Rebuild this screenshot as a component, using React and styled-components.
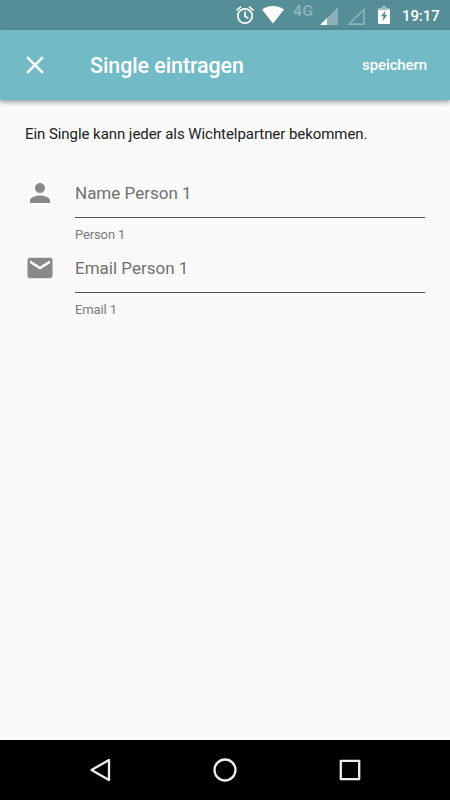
import React from "react";
import styled, { createGlobalStyle } from "styled-components";

const Global = createGlobalStyle`
  * { box-sizing: border-box; }
  body { margin: 0; background: #fafafa; font-family: Roboto, sans-serif; }
`;
const Screen = styled.div`
  width: 450px; height: 800px; display: flex; flex-direction: column; overflow: hidden;
  background: #fafafa; color: #212121;
`;
const StatusBar = styled.header`
  height: 30px; flex: none; display: flex; align-items: center; justify-content: flex-end;
  padding-right: 10px; background: #558e96; color: #fff;
`;
const StatusIcon = styled.svg`
  width: ${(p) => p.$w}px; height: 30px; margin-right: ${(p) => p.$gap}px; flex: none; display: block;
`;
const Network = styled.span`
  width: 22px; height: 30px; margin-right: 5px; font-size: 15.5px; font-weight: 700; line-height: 23px;
  letter-spacing: 0.6px; color: #8ab2b7;
`;
const Clock = styled.time` width: 38px; font-size: 15px; font-weight: 500; line-height: 20px; padding-top: 2px; letter-spacing: -0.1px; `;
const AppBar = styled.div`
  height: 70px; flex: none; display: flex; align-items: center; padding: 0 23px 0 20px;
  background: #72bac6; color: #fff; box-shadow: 0 2px 5px rgba(0,0,0,.4); z-index: 1;
`;
const CloseIcon = styled.svg` width: 30px; height: 30px; margin-right: 40px; `;
const Title = styled.h1`
  flex: 1; margin: 0; padding-top: 1px; font-size: 21.4px; font-weight: 500; line-height: 30px; white-space: nowrap; letter-spacing: -0.06px;
`;
const SaveButton = styled.button`
  border: 0; padding: 0; background: none; color: #fff; font: 500 15px/20px Roboto, sans-serif; letter-spacing: -0.1px;
`;
const Content = styled.main` flex: 1; padding: 24px 25px 0; `;
const Intro = styled.p` margin: 0 0 25px; font-size: 15px; line-height: 20px; white-space: nowrap; letter-spacing: -0.06px; `;
const Row = styled.div` display: flex; height: 75px; `;
const FieldIcon = styled.svg` width: 30px; height: 30px; margin: 9px 20px 0 0; flex: none; fill: #898989; `;
const Field = styled.label` flex: 1; display: flex; flex-direction: column; `;
const Label = styled.span`
  height: 49px; padding-top: 14px; border-bottom: 1px solid #555; font-size: 17px; line-height: 20px; color: #707070;
`;
const Helper = styled.span` margin-top: 9px; font-size: 13px; line-height: 16px; color: #7a7a7a; letter-spacing: -0.13px; `;
const NavBar = styled.nav`
  height: 60px; flex: none; display: flex; justify-content: center; align-items: center; gap: 95px; background: #000;
`;
const NavIcon = styled.svg`
  width: 30px; height: 30px; fill: none; stroke: #eee; stroke-width: 2.3; stroke-linejoin: round;
`;

export default function App() {
  return (
    <Screen>
      <Global />
      <StatusBar>
        <StatusIcon $w={20} $gap={7} viewBox="0 0 20 30" fill="none" stroke="#fff" strokeWidth="1.7">
          <circle cx="10" cy="16" r="7.2" />
          <path d="M1.5 10.4 6 6.7M18.5 10.4 14 6.7M10 11.5V16.3L13.4 18.4" />
        </StatusIcon>
        <StatusIcon $w={22} $gap={9} viewBox="0 0 22 30" fill="#fff">
          <path d="M11 23.5 0 9.5C3 7.2 6.7 6 11 6s8 1.2 11 3.5z" />
        </StatusIcon>
        <Network>4G</Network>
        <StatusIcon $w={18} $gap={9} viewBox="0 0 18 30">
          <path d="M0 25 18 7.2V25z" fill="#8ab2b7" /><path d="M0 25 7 18V25z" fill="#fff" />
        </StatusIcon>
        <StatusIcon $w={18} $gap={13} viewBox="0 0 18 30" fill="none" stroke="#8ab2b7" strokeWidth="1.7">
          <path d="M2 24.1 17 9.4V24.1z" />
        </StatusIcon>
        <StatusIcon $w={12} $gap={12} viewBox="0 0 12 30">
          <path d="M4 6h4v2h3q1 0 1 1v2H0V9q0-1 1-1h3z" fill="#9bbfc4" />
          <path d="M0 10h12v13q0 1-1 1H1q-1 0-1-1z" fill="#fff" />
          <path d="M7.5 10.5 3 16.2H5.6L4.5 21.5 9.3 14.7H6.8z" fill="#558e96" />
        </StatusIcon>
        <Clock>19:17</Clock>
      </StatusBar>
      <AppBar>
        <CloseIcon viewBox="0 0 24 24" fill="#fff"><path d="M19 6.41 17.59 5 12 10.59 6.41 5 5 6.41 10.59 12 5 17.59 6.41 19 12 13.41 17.59 19 19 17.59 13.41 12z" /></CloseIcon>
        <Title>Single eintragen</Title>
        <SaveButton>speichern</SaveButton>
      </AppBar>
      <Content>
        <Intro>Ein Single kann jeder als Wichtelpartner bekommen.</Intro>
        <Row>
          <FieldIcon viewBox="0 0 24 24"><path d="M12 12c2.21 0 4-1.79 4-4s-1.79-4-4-4-4 1.79-4 4 1.79 4 4 4zm0 2c-2.67 0-8 1.34-8 4v2h16v-2c0-2.66-5.33-4-8-4z" /></FieldIcon>
          <Field><Label>Name Person 1</Label><Helper>Person 1</Helper></Field>
        </Row>
        <Row>
          <FieldIcon viewBox="0 0 24 24"><path d="M20 3.8H4c-1.1 0-2 .9-2 2v12.4c0 1.1.9 2 2 2h16c1.1 0 2-.9 2-2V5.8c0-1.1-.9-2-2-2zm0 4.4-8 5-8-5V5.8l8 5 8-5z" /></FieldIcon>
          <Field><Label>Email Person 1</Label><Helper>Email 1</Helper></Field>
        </Row>
      </Content>
      <NavBar>
        <NavIcon viewBox="0 0 30 30"><path d="M24 5V25L6.5 15z" /></NavIcon>
        <NavIcon viewBox="0 0 30 30"><circle cx="15" cy="15" r="10.5" /></NavIcon>
        <NavIcon viewBox="0 0 30 30"><rect x="5.8" y="5.8" width="18.4" height="18.4" /></NavIcon>
      </NavBar>
    </Screen>
  );
}
